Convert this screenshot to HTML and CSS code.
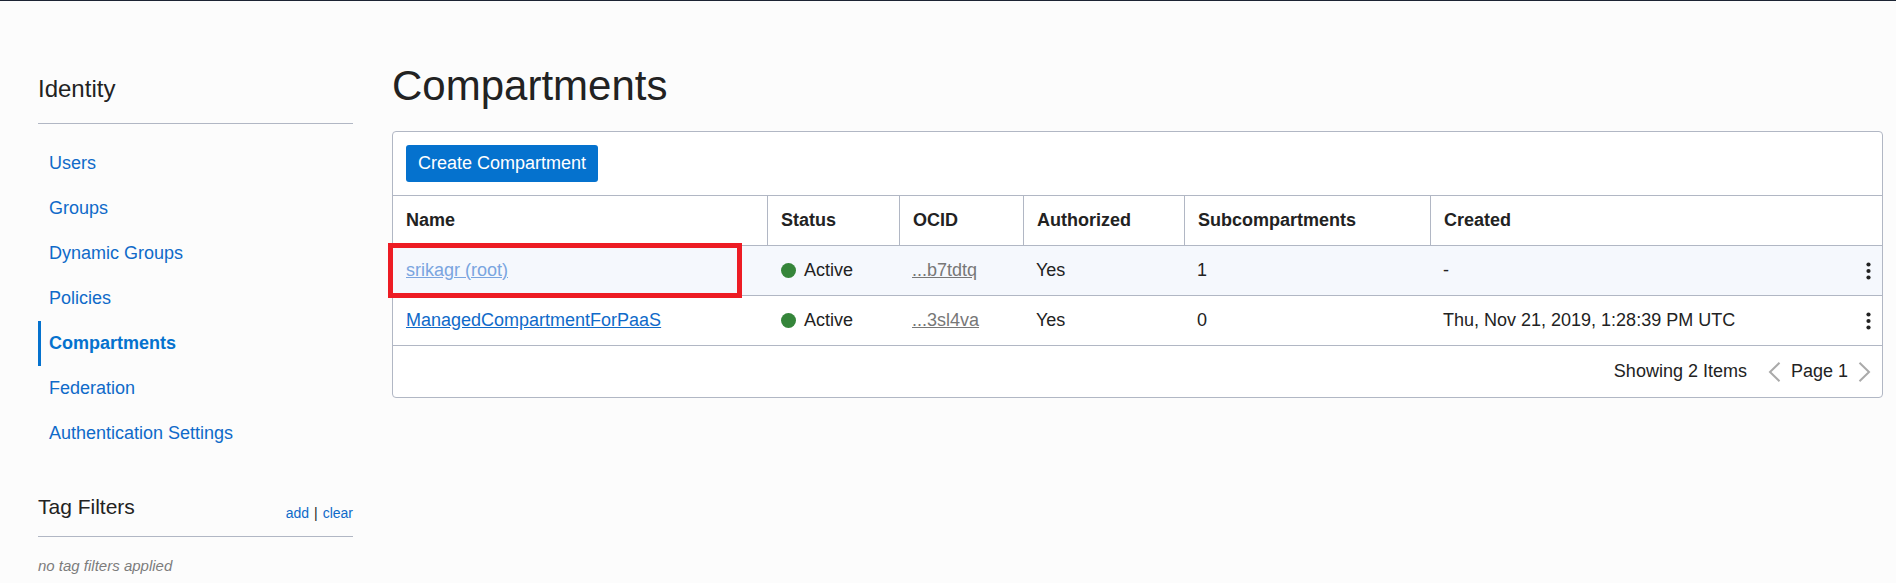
FILE: index.html
```html
<!DOCTYPE html>
<html lang="en">
<head>
<meta charset="utf-8">
<title>Compartments</title>
<link rel="stylesheet" href="styles.css">
</head>
<body>
<div class="topbar"></div>
<div class="layout">
  <aside class="sidebar">
    <h2 class="sidebar-title">Identity</h2>
    <nav class="nav" aria-label="Identity">
      <a class="nav-link" href="#">Users</a>
      <a class="nav-link" href="#">Groups</a>
      <a class="nav-link" href="#">Dynamic Groups</a>
      <a class="nav-link" href="#">Policies</a>
      <a class="nav-link nav-link-active" href="#" aria-current="page">Compartments</a>
      <a class="nav-link" href="#">Federation</a>
      <a class="nav-link" href="#">Authentication Settings</a>
    </nav>
    <div class="tags-header">
      <h3 class="tags-title">Tag Filters</h3>
      <div class="tags-actions"><a href="#">add</a><span>|</span><a href="#">clear</a></div>
    </div>
    <p class="tags-empty">no tag filters applied</p>
  </aside>
  <main class="main">
    <h1 class="page-title">Compartments</h1>
    <section class="panel">
      <div class="toolbar"><button class="create" type="button">Create Compartment</button></div>
      <table class="table">
        <colgroup>
          <col class="col-name"><col class="col-status"><col class="col-ocid"><col class="col-auth"><col class="col-sub"><col><col class="col-menu">
        </colgroup>
        <thead>
          <tr><th scope="col">Name</th><th scope="col">Status</th><th scope="col">OCID</th><th scope="col">Authorized</th><th scope="col">Subcompartments</th><th scope="col" colspan="2">Created</th></tr>
        </thead>
        <tbody>
          <tr class="row-hover">
            <td class="marked"><a class="name name-visited" href="#">srikagr (root)</a><span class="marker"></span></td>
            <td class="status-cell"><span class="status"><span class="dot"></span><span class="status-label">Active</span></span></td>
            <td><a class="ocid" href="#">...b7tdtq</a></td>
            <td>Yes</td>
            <td>1</td>
            <td>-</td>
            <td class="menu-cell"><button class="icon-button" type="button" aria-label="Actions"><svg width="5" height="18" viewBox="0 0 5 18"><circle cx="2.5" cy="2.5" r="2.1"/><circle cx="2.5" cy="9" r="2.1"/><circle cx="2.5" cy="15.5" r="2.1"/></svg></button></td>
          </tr>
          <tr>
            <td><a class="name" href="#">ManagedCompartmentForPaaS</a></td>
            <td class="status-cell"><span class="status"><span class="dot"></span><span class="status-label">Active</span></span></td>
            <td><a class="ocid" href="#">...3sl4va</a></td>
            <td>Yes</td>
            <td>0</td>
            <td>Thu, Nov 21, 2019, 1:28:39 PM UTC</td>
            <td class="menu-cell"><button class="icon-button" type="button" aria-label="Actions"><svg width="5" height="18" viewBox="0 0 5 18"><circle cx="2.5" cy="2.5" r="2.1"/><circle cx="2.5" cy="9" r="2.1"/><circle cx="2.5" cy="15.5" r="2.1"/></svg></button></td>
          </tr>
        </tbody>
      </table>
      <div class="pager">
        <span class="pager-text pager-count">Showing 2 Items</span>
        <button class="icon-button" type="button" aria-label="Previous page"><svg class="chevron" width="13" height="20" viewBox="0 0 13 20"><path d="M11.5 .8 2 10l9.5 9.2"/></svg></button>
        <span class="pager-text">Page 1</span>
        <button class="icon-button" type="button" aria-label="Next page"><svg class="chevron" width="13" height="20" viewBox="0 0 13 20"><path d="M1.5 .8 11 10l-9.5 9.2"/></svg></button>
      </div>
    </section>
  </main>
</div>
</body>
</html>
```

FILE: styles.css
```css
* { box-sizing: border-box; }

body {
  margin: 0;
  background: #fcfcfc;
  color: #222;
  font: 18px/20px "Liberation Sans", Arial, sans-serif;
}

h1, h2, h3, p { margin: 0; font-weight: 400; }

a { color: #0f6ac9; text-decoration: none; }

.topbar { height: 1px; background: #1c2433; }

.layout {
  display: grid;
  grid-template-columns: 315px minmax(0, 1fr);
  column-gap: 39px;
  padding: 0 13px 0 38px;
}

.sidebar { padding-top: 74px; }

.sidebar-title {
  padding-bottom: 20px;
  border-bottom: 1px solid #b1b7c4;
  font-size: 24px;
  line-height: 28px;
}

.nav {
  display: flex;
  flex-direction: column;
  padding-top: 17px;
}

.nav-link {
  padding-left: 8px;
  border-left: 3px solid transparent;
  line-height: 45px;
}

.nav-link-active {
  border-left-color: #0572ce;
  color: #0572ce;
  font-weight: 700;
}

.tags-header {
  display: flex;
  justify-content: space-between;
  align-items: flex-end;
  margin-top: 39px;
  padding-bottom: 13px;
  border-bottom: 1px solid #b1b7c4;
}

.tags-title {
  padding-bottom: 4px;
  font-size: 21px;
  line-height: 24px;
}

.tags-actions {
  display: flex;
  gap: 5px;
  font-size: 14px;
}

.tags-empty {
  margin-top: 20px;
  color: #7c7c7c;
  font-size: 15px;
  font-style: italic;
  line-height: 18px;
}

.main { padding-top: 61px; }

.page-title {
  margin-bottom: 21px;
  font-size: 42px;
  line-height: 48px;
}

.panel {
  border: 1px solid #b1b7c4;
  border-radius: 4px;
  background: #fff;
}

.toolbar {
  display: flex;
  padding: 13px;
  border-bottom: 1px solid #b1b7c4;
}

.create {
  height: 37px;
  padding: 0 12px 2px;
  border: 0;
  border-radius: 3px;
  background: #0572ce;
  color: #fff;
  font: inherit;
}

.table {
  width: 100%;
  table-layout: fixed;
  border-collapse: separate;
  border-spacing: 0;
}

.col-name { width: 375px; }
.col-status { width: 132px; }
.col-ocid { width: 124px; }
.col-auth { width: 161px; }
.col-sub { width: 246px; }
.col-menu { width: 40px; }

.table th, .table td {
  height: 50px;
  padding: 0 12px 2px 13px;
  border-bottom: 1px solid #b1b7c4;
  text-align: left;
}

.table th { border-right: 1px solid #b1b7c4; }
.table th:last-child { border-right: 0; }

.table td:nth-child(n+3) { padding-left: 12px; }
.table .status-cell { padding-bottom: 0; }
.table .menu-cell { padding-right: 11px; padding-bottom: 0; }

.row-hover { background: #f5f8fd; }

.name, .ocid { text-decoration: underline; }
.name-visited { color: #7aa5e0; }
.ocid { color: #777; }

.marked { position: relative; }

.marker {
  position: absolute;
  inset: -3px 26px -3px -5px;
  border: 5px solid #ed1c24;
  pointer-events: none;
}

.status {
  display: flex;
  align-items: center;
  gap: 8px;
}

.status-label, .pager-text { padding-bottom: 2px; }

.dot {
  width: 15px;
  height: 15px;
  border-radius: 50%;
  background: #35853a;
}

.icon-button {
  display: block;
  padding: 0;
  border: 0;
  background: none;
  color: #222;
}

.icon-button svg { display: block; fill: currentColor; }

.menu-cell .icon-button { margin-left: auto; }

.icon-button .chevron {
  fill: none;
  stroke: #aaa;
  stroke-width: 2;
}

.pager {
  display: flex;
  justify-content: flex-end;
  align-items: center;
  gap: 10px;
  height: 51px;
  padding-right: 11px;
}

.pager-count { margin-right: 11px; }
```
